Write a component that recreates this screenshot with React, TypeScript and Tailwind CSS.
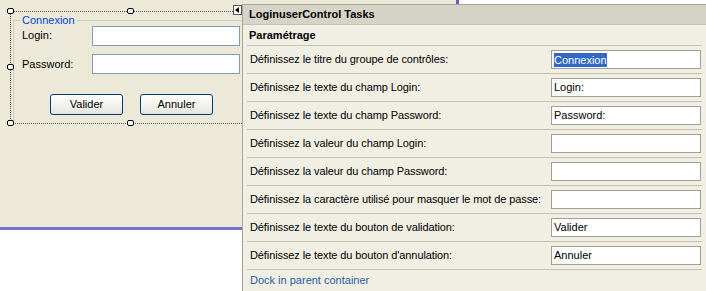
import React from "react";

const rows: { label: string; value: string; selected?: boolean }[] = [
  { label: "Définissez le titre du groupe de contrôles:", value: "Connexion", selected: true },
  { label: "Définissez le texte du champ Login:", value: "Login:" },
  { label: "Définissez le texte du champ Password:", value: "Password:" },
  { label: "Définissez la valeur du champ Login:", value: "" },
  { label: "Définissez la valeur du champ Password:", value: "" },
  { label: "Définissez la caractère utilisé pour masquer le mot de passe:", value: "" },
  { label: "Définissez le texte du bouton de validation:", value: "Valider" },
  { label: "Définissez le texte du bouton d'annulation:", value: "Annuler" },
];

function Handle({ x, y }: { x: number; y: number }) {
  return (
    <div
      className="absolute w-[7px] h-[6px] bg-white border border-black rounded-[2px]"
      style={{ left: x - 3, top: y - 3 }}
    />
  );
}

export default function App() {
  return (
    <div
      className="relative w-[706px] h-[291px] overflow-hidden flex bg-white text-[11px] text-black"
      style={{ fontFamily: '"Liberation Sans", Arial, sans-serif' }}
    >
      {/* Left designer surface */}
      <div className="w-[242px] shrink-0 flex flex-col">
        <div className="relative h-[227px] bg-[#ECE9D8]">
          {/* group box */}
          <div className="absolute left-[13px] top-[20px] right-0 bottom-[104px] border-t border-l border-[#D0CDBE]" />
          <div className="absolute left-[20px] top-[13px] px-[2px] bg-[#ECE9D8] text-[#0046D5] leading-[14px]">
            Connexion
          </div>
          <div className="absolute left-[22px] top-[28px] leading-[14px]">Login:</div>
          <div className="absolute left-[92px] top-[26px] w-[148px] h-[20px] bg-white border border-[#7F9DB9]" />
          <div className="absolute left-[22px] top-[57px] leading-[14px]">Password:</div>
          <div className="absolute left-[92px] top-[54px] w-[148px] h-[20px] bg-white border border-[#7F9DB9]" />
          <div className="absolute left-[50px] top-[94px] w-[73px] h-[21px] rounded-[3px] border border-[#003C74] bg-gradient-to-b from-white to-[#E6E5DE] flex items-center justify-center">
            Valider
          </div>
          <div className="absolute left-[140px] top-[94px] w-[73px] h-[21px] rounded-[3px] border border-[#003C74] bg-gradient-to-b from-white to-[#E6E5DE] flex items-center justify-center">
            Annuler
          </div>
          {/* selection frame */}
          <div className="absolute left-[10px] top-[11px] w-[225px] h-0 border-t border-dotted border-[#555]" />
          <div className="absolute left-[10px] top-[123px] w-[232px] h-0 border-t border-dotted border-[#555]" />
          <div className="absolute left-[10px] top-[11px] w-0 h-[112px] border-l border-dotted border-[#555]" />
          <Handle x={10} y={11} />
          <Handle x={130} y={11} />
          <Handle x={10} y={67} />
          <Handle x={10} y={123} />
          <Handle x={130} y={123} />
          {/* smart tag glyph */}
          <div className="absolute left-[233px] top-[5px] w-[9px] h-[10px] bg-white border border-[#555] flex items-center justify-center">
            <svg width="5" height="6" viewBox="0 0 5 6">
              <path d="M4 0 L0 3 L4 6 Z" fill="#000" />
            </svg>
          </div>
        </div>
        <div className="h-[3px] bg-[#7273D2]" />
        <div className="flex-1 bg-white" />
      </div>

      {/* Right tasks panel */}
      <div className="flex-1 flex flex-col">
        <div className="h-[4px] flex">
          <div className="w-[214px] bg-[#ECE9D8]" />
          <div className="w-[3px] bg-[#5D5FC8]" />
          <div className="flex-1 bg-white" />
        </div>
        <div className="flex-1 flex flex-col border-l border-t border-[#A7A69B] bg-[#F1EFE4]">
          <div className="h-[20px] shrink-0 flex items-center pl-[6px] font-bold bg-[#D6D3C7] border-b border-[#C5C2B2]">
            LoginuserControl Tasks
          </div>
          <div className="h-[21px] shrink-0 flex items-center pl-[6px] font-bold mx-[4px] border-b border-[#C5C2B2]">
            <span className="-ml-[4px]">Paramétrage</span>
          </div>
          {rows.map((r, i) => (
            <div
              key={i}
              className="h-[28px] shrink-0 flex items-center justify-between ml-[4px] mr-[4px] pl-[3px] border-b border-[#C5C2B2]"
            >
              <span className="tracking-[-0.1px]">{r.label}</span>
              <div className="w-[150px] h-[19px] bg-white border border-[#A0A096] flex items-center pl-[2px] mr-[1px]">
                {r.selected ? (
                  <span className="bg-[#316AC5] text-white leading-[14px]">{r.value}</span>
                ) : (
                  <span>{r.value}</span>
                )}
              </div>
            </div>
          ))}
          <div className="flex-1 flex items-center pl-[7px] text-[#2A5CAA]">Dock in parent container</div>
        </div>
      </div>
    </div>
  );
}
